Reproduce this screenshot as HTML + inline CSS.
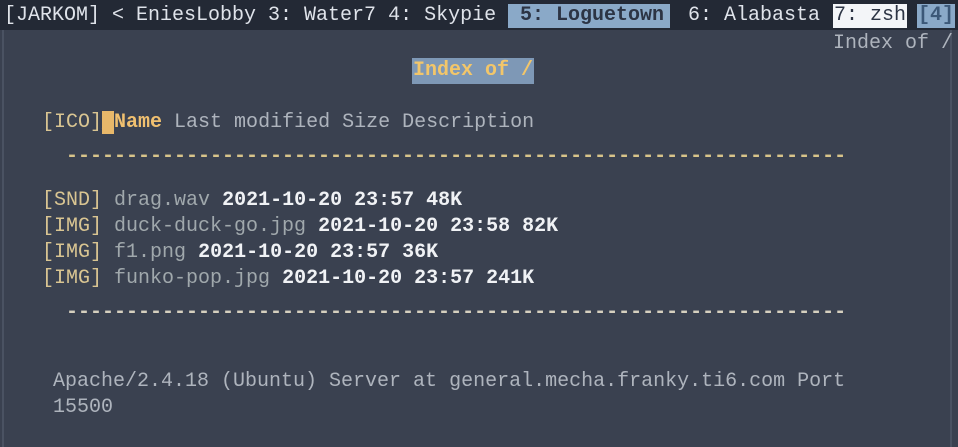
<!DOCTYPE html>
<html><head><style>
body{margin:0;width:958px;height:447px;background:#3a4150;overflow:hidden;font-family:"Liberation Mono","DejaVu Sans Mono",monospace;font-size:20px;position:relative}
.l{position:absolute;white-space:pre;line-height:26px;height:26px}
.top{position:absolute;left:0;top:0;width:958px;height:30px;background:#232935}
.g{color:#aeb4bd}.y{color:#d9c592}.w{color:#f0f2f5;font-weight:bold}.f{color:#a0a8ac}
.d{color:#d8c48a;font-weight:bold}
.brd{position:absolute;left:2px;top:30px;width:946px;height:417px;border-left:2px solid #4a5262;border-right:2px solid #4a5262}
</style></head><body>
<div class="top"></div>
<div class="brd"></div>
<div class="l" style="left:4px;top:3px;color:#dfe3ea">[JARKOM] &lt; EniesLobby 3: Water7 4: Skypie </div>
<div class="l" style="left:508px;top:4px;height:24px;line-height:24px;background:#8aa9c8;color:#2c3444;font-weight:bold;padding:0 6px 0 12px">5: Loguetown</div>
<div class="l" style="left:688px;top:3px;color:#dfe3ea">6: Alabasta</div>
<div class="l" style="left:833px;top:4px;height:24px;line-height:24px;background:#f3f5f8;color:#2c3444;padding:0 1px">7: zsh</div>
<div class="l" style="left:917px;top:4px;height:24px;line-height:24px;background:#8aa9c8;color:#3c5878;font-weight:bold;padding:0 1px">[4]</div>
<div class="l g" style="left:833px;top:31px">Index of /</div>
<div class="l" style="left:412px;top:58px;background:#7e98b6;color:#f2c66a;font-weight:bold;padding:0 1px">Index of /</div>
<div class="l" style="left:42px;top:110px"><span class="y">[ICO]</span><span style="background:#e8b86a;color:#e8b86a">_</span><span style="color:#f0c070;font-weight:bold">Name</span><span class="g"> Last modified Size Description</span></div>
<div class="l d" style="left:66px;top:144px">-----------------------------------------------------------------</div>
<div class="l" style="left:42px;top:188px"><span class="y">[SND]</span> <span class="f">drag.wav</span> <span class="w">2021-10-20 23:57 48K</span></div>
<div class="l" style="left:42px;top:214px"><span class="y">[IMG]</span> <span class="f">duck-duck-go.jpg</span> <span class="w">2021-10-20 23:58 82K</span></div>
<div class="l" style="left:42px;top:240px"><span class="y">[IMG]</span> <span class="f">f1.png</span> <span class="w">2021-10-20 23:57 36K</span></div>
<div class="l" style="left:42px;top:266px"><span class="y">[IMG]</span> <span class="f">funko-pop.jpg</span> <span class="w">2021-10-20 23:57 241K</span></div>
<div class="l d" style="left:66px;top:300px;color:#d6d0bf">-----------------------------------------------------------------</div>
<div class="l g" style="left:53px;top:369px">Apache/2.4.18 (Ubuntu) Server at general.mecha.franky.ti6.com Port</div>
<div class="l g" style="left:53px;top:395px">15500</div>
</body></html>
